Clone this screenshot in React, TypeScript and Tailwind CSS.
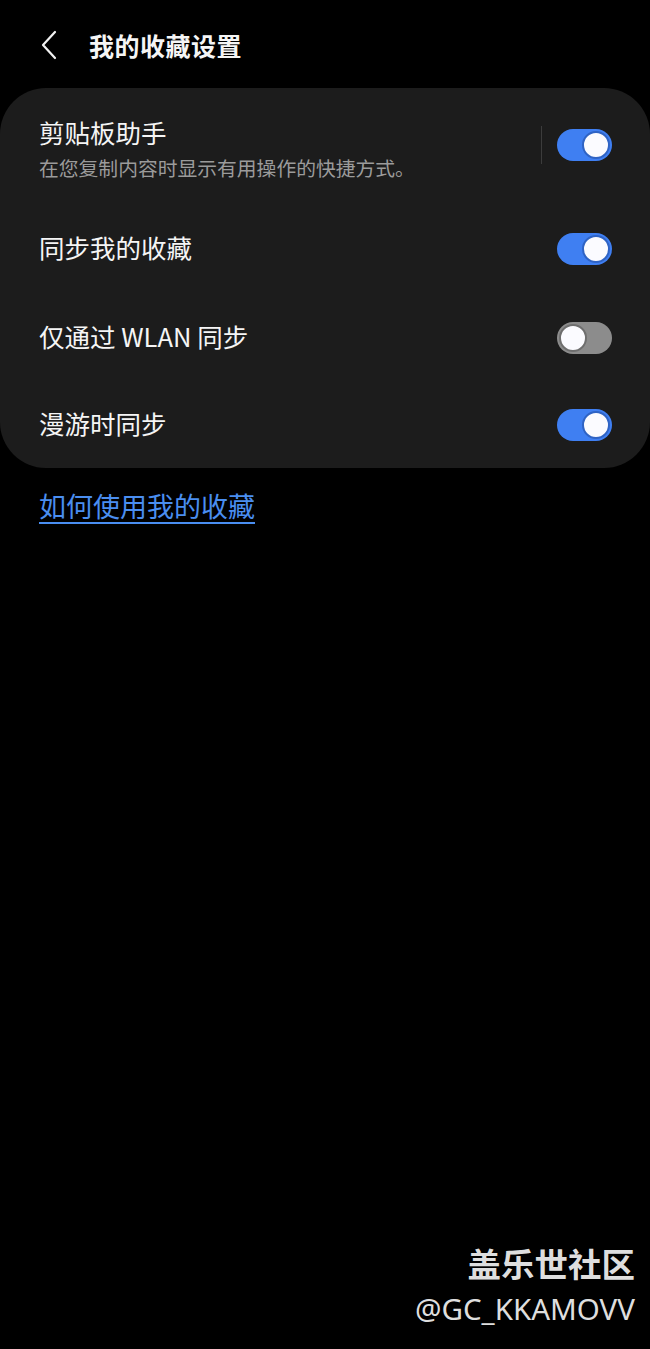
import React from "react";

const font = { fontFamily: '"Noto Sans CJK SC", "Noto Sans", sans-serif' };

const Toggle = ({ on }: { on: boolean }) => (
  <div
    className={
      on
        ? "flex h-[32px] w-[55px] items-center justify-end rounded-full bg-[#3f7ff2] px-[2px]"
        : "flex h-[32px] w-[55px] items-center justify-start rounded-full bg-[#8c8c8c] px-[2px]"
    }
  >
    <div
      className={
        on
          ? "h-[28px] w-[28px] rounded-full border-[2px] border-[#2f63c4] bg-[#fbfbff]"
          : "h-[28px] w-[28px] rounded-full border-[2px] border-[#6e6e6e] bg-[#fbfbff]"
      }
    />
  </div>
);

const rows = [
  { label: "同步我的收藏", on: true, h: "h-[89px]" },
  { label: "仅通过 WLAN 同步", on: false, h: "h-[89px]" },
  { label: "漫游时同步", on: true, h: "h-[86px]" },
];

export default function App() {
  return (
    <div className="min-h-[1349px] w-[650px] bg-black text-[#f5f5f5]" style={font}>
      <header className="flex h-[88px] items-start pt-[25px]">
        <button type="button" className="ml-[41px] mt-[5px] flex h-[30px] w-[16px] items-center justify-center" aria-label="返回">
          <svg width="16" height="30" viewBox="0 0 16 30" fill="none" stroke="#f2f2f2" strokeWidth="2.2" strokeLinecap="round" strokeLinejoin="round">
            <path d="M14 2L2 15l12 13" />
          </svg>
        </button>
        <h1 className="ml-[32px] text-[25px] font-bold leading-[40px] tracking-[0.5px]">我的收藏设置</h1>
      </header>

      <section className="rounded-[46px] bg-[#1c1c1c]">
        <div className="flex items-center pb-[20px] pl-[39px] pr-[38px] pt-[24px]">
          <div className="flex-1">
            <div className="text-[25.5px] leading-[40px]">剪贴板助手</div>
            <div className="text-[19.8px] leading-[32px] text-[#9b9b9b]">在您复制内容时显示有用操作的快捷方式。</div>
          </div>
          <div className="mr-[15px] -mt-[6px] h-[38px] w-px bg-[#3c3c3c]" />
          <div className="-mt-[6px]">
            <Toggle on />
          </div>
        </div>
        {rows.map((r) => (
          <div key={r.label} className={`flex ${r.h} items-center pl-[39px] pr-[38px]`}>
            <div className="flex-1 pb-[4px] text-[25.5px] leading-[40px]">{r.label}</div>
            <Toggle on={r.on} />
          </div>
        ))}
      </section>

      <div className="pl-[39px] pt-[18px]">
        <a href="#" className="text-[27px] leading-[40px] text-[#4a8ef0] underline decoration-[1.5px] underline-offset-[5px]">
          如何使用我的收藏
        </a>
      </div>

      <div className="mt-[714px] flex flex-col items-end pr-[15px] text-[#dedede]">
        <div className="text-[33.5px] font-bold leading-[46px]">盖乐世社区</div>
        <div className="mt-[3px] text-[29.5px] leading-[40px]" style={{ fontFamily: '"Noto Sans", "Open Sans", sans-serif' }}>
          @GC_KKAMOVV
        </div>
      </div>
    </div>
  );
}
